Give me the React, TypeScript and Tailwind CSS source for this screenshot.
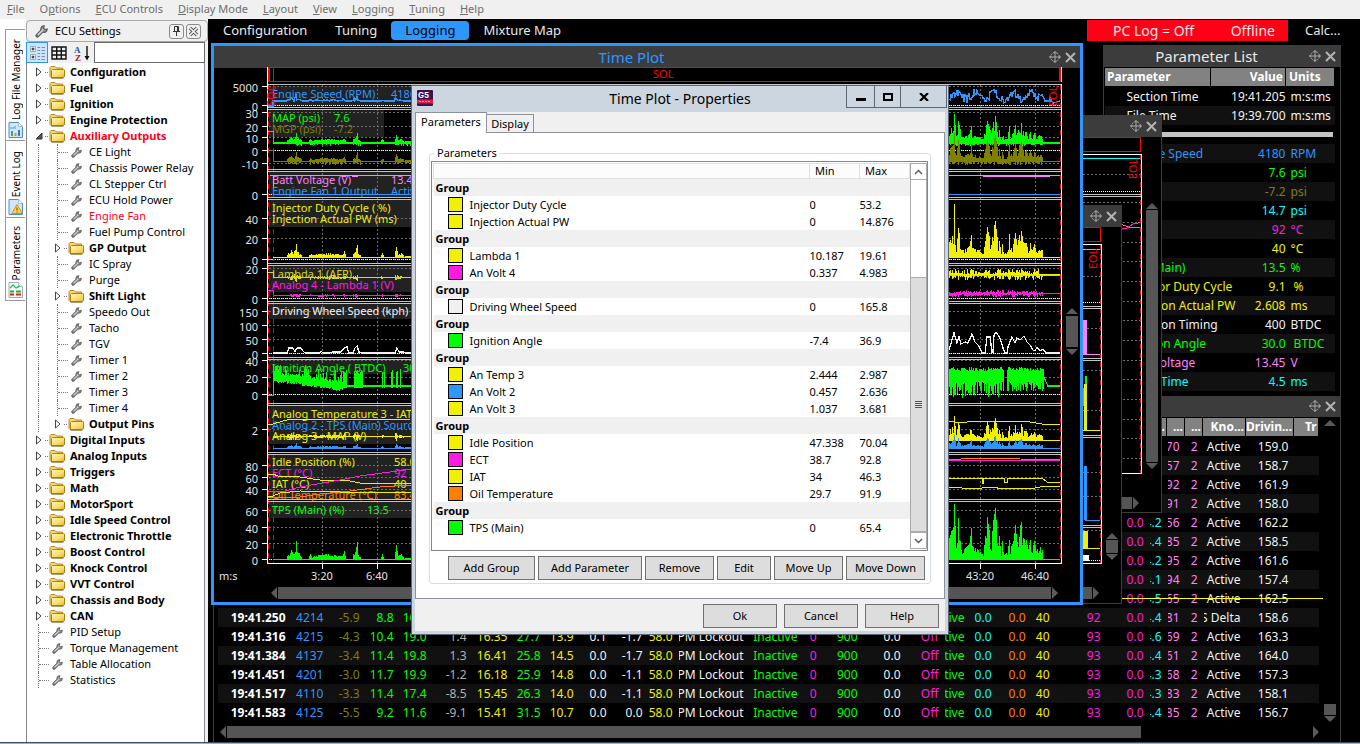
import type { ReactNode } from 'react';

const RED = '#ff0010';
const BLUE = '#2e97ff';
const GREEN = '#00ff00';
const OLIVE = '#808000';
const YELLOW = '#f0f000';
const MAGENTA = '#ff1ce0';
const VIOLET = '#ff80ff';
const ORANGE = '#ff8000';
const CYAN = '#00ffff';
const WHITE = '#f2f2f2';

/* ---------- menu and navigation ---------- */

const menus = ['File', 'Options', 'ECU Controls', 'Display Mode', 'Layout', 'View', 'Logging', 'Tuning', 'Help'];
const menuKeys = [0, 1, 0, 0, 0, 0, 0, 0, 0];

function MenuBar() {
  return (
    <nav className="flex h-[19px] shrink-0 items-center gap-[15px] bg-[#f0f0f0] pb-px pl-[7px] text-[11px] leading-[18px] text-[#6d6d6d]">
      {menus.map((label, i) => (
        <button key={label} className="whitespace-nowrap">
          {label.slice(0, menuKeys[i])}
          <span className="underline">{label[menuKeys[i]]}</span>
          {label.slice(menuKeys[i] + 1)}
        </button>
      ))}
    </nav>
  );
}

function LayoutBar() {
  return (
    <div className="flex h-[24px] items-center bg-black pb-px text-[13px] text-[#e8e8e8]">
      <button className="ml-[15px]">Configuration</button>
      <button className="ml-[28px]">Tuning</button>
      <button className="ml-[14px] h-[19px] rounded-[4px] bg-[#2e97ff] px-[14px] leading-[19px] text-black">Logging</button>
      <button className="ml-[14px]">Mixture Map</button>
      <div className="ml-auto flex h-[21px] w-[201px] items-center justify-between bg-[#ff0016] pr-[13px] pl-[26px] text-[14px]">
        <span>PC Log = Off</span>
        <span>Offline</span>
      </div>
      <button className="w-[72px] pl-[17px] text-left">Calc...</button>
    </div>
  );
}

/* ---------- small icons ---------- */

function WrenchIcon({ size = 11 }: { size?: number }) {
  return (
    <svg width={size} height={size} viewBox="0 0 12 12" className="shrink-0" fill="none">
      <path d="M2.2 9.8 L7 5" stroke="#5c5c5c" strokeWidth="3.6" strokeLinecap="round" />
      <path d="M8.6 0.8 A3 3 0 1 0 11.3 3.6 L9.2 4.2 L7.9 3 Z" fill="#8e8e8e" stroke="#5c5c5c" strokeWidth="1" />
      <path d="M2.4 9.6 L7.4 4.6" stroke="#d0d0d0" strokeWidth="1.6" strokeLinecap="round" />
      <circle cx="2.3" cy="9.7" r="0.7" fill="#555" />
    </svg>
  );
}

function FolderIcon() {
  return (
    <svg width="16" height="14" viewBox="0 0 16 14" className="shrink-0">
      <defs>
        <linearGradient id="folder" x1="0" y1="0" x2="1" y2="1">
          <stop offset="0" stopColor="#fff6c0" />
          <stop offset="0.6" stopColor="#fbdc6a" />
          <stop offset="1" stopColor="#e9b62c" />
        </linearGradient>
      </defs>
      <path d="M1 12 V2.5 L2 1.5 H6 L7.5 3 H13.5 V5" fill="#f5d878" stroke="#b08a20" />
      <path d="M2 12.5 H14 L15.5 11.5 V5 L14.5 4.5 H3.5 L2.5 5.5 V12 Z" fill="url(#folder)" stroke="#a67f18" />
      <path d="M2.5 13.3 H14.5" stroke="#7d6320" strokeWidth="0.8" />
    </svg>
  );
}

function Expander({ open }: { open?: boolean }) {
  return (
    <svg width="8" height="10" viewBox="0 0 8 10" className="shrink-0">
      {open ? <path d="M7 2 V8 H1 Z" fill="#555" stroke="#333" /> : <path d="M1.5 1 V9 L6 5 Z" fill="#fff" stroke="#444" />}
    </svg>
  );
}

function MoveIcon() {
  return (
    <svg width="12" height="12" viewBox="0 0 12 12" fill="none" stroke="#a8a8a8">
      <circle cx="6" cy="6" r="4.3" strokeDasharray="2 1" />
      <path d="M6 0.5 V11.5 M0.5 6 H11.5" />
      <path d="M4.8 1.8 L6 0.5 L7.2 1.8 M4.8 10.2 L6 11.5 L7.2 10.2 M1.8 4.8 L0.5 6 L1.8 7.2 M10.2 4.8 L11.5 6 L10.2 7.2" />
    </svg>
  );
}

function CloseIcon() {
  return (
    <svg width="11" height="11" viewBox="0 0 11 11" fill="none" stroke="#b4b4b4" strokeWidth="2">
      <path d="M1 1 L10 10 M10 1 L1 10" />
    </svg>
  );
}

function Arrow({ dir }: { dir: 'up' | 'down' | 'left' | 'right' }) {
  const shape = {
    up: 'M6 0 L12 6 H0 Z',
    down: 'M0 0 H12 L6 6 Z',
    left: 'M6 0 V12 L0 6 Z',
    right: 'M0 0 L6 6 L0 12 Z',
  }[dir];
  const flat = dir === 'up' || dir === 'down';
  return (
    <svg width={flat ? 12 : 6} height={flat ? 6 : 12} className="shrink-0">
      <path d={shape} fill="#5a5a5a" />
    </svg>
  );
}

/* ---------- left side ---------- */

function DocIcon({ kind }: { kind: 'log' | 'event' | 'param' }) {
  return (
    <svg width="15" height="16" viewBox="0 0 15 16" className="shrink-0">
      <path d="M1 0.5 H10.5 L14.5 4.5 V15.5 H1 Z" fill={kind === 'param' ? '#f7f7f7' : '#cfe6fb'} stroke={kind === 'param' ? '#aaa' : '#4f8fc9'} />
      <path d="M10.5 0.5 V4.5 H14.5" fill="#fff" stroke="#8aa" strokeWidth="0.7" />
      {kind === 'log' && (
        <>
          <path d="M3 5 V7 M5 5 V7 M7 4 V7" stroke="#4aa0d8" />
          <path d="M4 9 V14" stroke="#36b24a" strokeWidth="2" />
          <path d="M7.5 11 V14" stroke="#e8892c" strokeWidth="2" />
          <path d="M11 8 V14" stroke="#3676c8" strokeWidth="2" />
        </>
      )}
      {kind === 'event' && (
        <>
          <path d="M9 5.5 L14.3 14.5 H3.7 Z" fill="#ffd24d" stroke="#d09018" />
          <path d="M9 8.5 V11.5 M9 12.5 V13.5" stroke="#6b4a00" />
        </>
      )}
      {kind === 'param' && (
        <>
          <path d="M2 6 L5 3 L8 6 L12 4" fill="none" stroke="#26c46b" strokeWidth="1.4" />
          <path d="M2 9.5 H6 M8 9.5 H13" stroke="#1fb53c" strokeWidth="2" />
          <path d="M2 12.5 H6 M8 12.5 H13" stroke="#e02020" strokeWidth="2" />
        </>
      )}
    </svg>
  );
}

function SideTab({ label, kind, className }: { label: string; kind: 'log' | 'event' | 'param'; className: string }) {
  return (
    <button className={`flex w-[20px] flex-col items-center justify-end gap-[2px] border border-r-0 border-[#9a9a9a] bg-white pb-[2px] text-[10px] leading-[16px] ${className}`}>
      <span className="rotate-180 whitespace-nowrap [writing-mode:vertical-rl]">{label}</span>
      <DocIcon kind={kind} />
    </button>
  );
}

interface TreeItem {
  label: string;
  leaf?: boolean;
  open?: boolean;
  child?: boolean;
  active?: boolean;
}

const tree: TreeItem[] = [
  { label: 'Configuration' },
  { label: 'Fuel' },
  { label: 'Ignition' },
  { label: 'Engine Protection' },
  { label: 'Auxiliary Outputs', open: true, active: true },
  { label: 'CE Light', leaf: true, child: true },
  { label: 'Chassis Power Relay', leaf: true, child: true },
  { label: 'CL Stepper Ctrl', leaf: true, child: true },
  { label: 'ECU Hold Power', leaf: true, child: true },
  { label: 'Engine Fan', leaf: true, child: true, active: true },
  { label: 'Fuel Pump Control', leaf: true, child: true },
  { label: 'GP Output', child: true },
  { label: 'IC Spray', leaf: true, child: true },
  { label: 'Purge', leaf: true, child: true },
  { label: 'Shift Light', child: true },
  { label: 'Speedo Out', leaf: true, child: true },
  { label: 'Tacho', leaf: true, child: true },
  { label: 'TGV', leaf: true, child: true },
  { label: 'Timer 1', leaf: true, child: true },
  { label: 'Timer 2', leaf: true, child: true },
  { label: 'Timer 3', leaf: true, child: true },
  { label: 'Timer 4', leaf: true, child: true },
  { label: 'Output Pins', child: true },
  { label: 'Digital Inputs' },
  { label: 'Analog Inputs' },
  { label: 'Triggers' },
  { label: 'Math' },
  { label: 'MotorSport' },
  { label: 'Idle Speed Control' },
  { label: 'Electronic Throttle' },
  { label: 'Boost Control' },
  { label: 'Knock Control' },
  { label: 'VVT Control' },
  { label: 'Chassis and Body' },
  { label: 'CAN' },
  { label: 'PID Setup', leaf: true },
  { label: 'Torque Management', leaf: true },
  { label: 'Table Allocation', leaf: true },
  { label: 'Statistics', leaf: true },
];

function TreeRow({ item }: { item: TreeItem }) {
  return (
    <li className={`flex h-[16px] items-center pl-[8px] ${item.active ? 'text-[#ff0018]' : 'text-black'}`}>
      {item.child && <span className="ml-[3px] h-full w-[16px] border-l border-dotted border-[#777]" />}
      {item.leaf ? (
        <>
          <span className="ml-[3px] flex h-full w-[11px] items-center border-l border-dotted border-[#777]">
            <span className="w-full border-t border-dotted border-[#777]" />
          </span>
          <span className="mr-[7px] ml-[3px] flex">
            <WrenchIcon />
          </span>
          <span className="whitespace-nowrap">{item.label}</span>
        </>
      ) : (
        <>
          <Expander open={item.open} />
          <span className="mr-[1px] ml-[2px] w-[3px] border-t border-dotted border-[#777]" />
          <FolderIcon />
          <span className="ml-[5px] font-bold whitespace-nowrap">{item.label}</span>
        </>
      )}
    </li>
  );
}

function SettingsPanel() {
  return (
    <aside className="flex w-[182px] shrink-0 flex-col bg-[#f0f0f0]">
      <header className="mt-px flex h-[22px] items-center rounded-[4px] border border-[#a8a8a8] pr-[6px] pl-[8px]">
        <WrenchIcon size={13} />
        <span className="ml-[7px] flex-1 text-[11px] whitespace-nowrap">ECU Settings</span>
        <button aria-label="Pin" className="flex h-[15px] w-[15px] items-center justify-center rounded-[3px] border border-[#8a8a8a]">
          <svg width="9" height="10" viewBox="0 0 9 10" fill="none" stroke="#333">
            <path d="M2.5 0.5 H6.5 V5 M2.5 0.5 V5 M1 5.5 H8 M4.5 5.5 V10 M5.5 1 V5" />
          </svg>
        </button>
        <button aria-label="Close" className="ml-[2px] flex h-[15px] w-[15px] items-center justify-center rounded-[3px] border border-[#8a8a8a]">
          <svg width="11" height="11" viewBox="0 0 11 11" fill="none">
            <path d="M2 2 L9 9 M9 2 L2 9" stroke="#555" strokeWidth="3.4" />
            <path d="M2 2 L9 9 M9 2 L2 9" stroke="#f4f4f4" strokeWidth="1.6" />
          </svg>
        </button>
      </header>
      <div className="flex h-[21px] items-center pr-[3px]">
        <button aria-label="Tree view" className="flex h-[21px] w-[22px] items-center justify-center border border-[#2e97e0] bg-[#cbe6fa]">
          <svg width="17" height="16" viewBox="0 0 17 16" fill="none">
            <path d="M1.5 1.5 H6.5 V6.5 H1.5 Z M1.5 9.5 H6.5 V14.5 H1.5 Z" fill="#fff" stroke="#9ab" />
            <path d="M4 2.5 V5.5 M2.5 4 H5.5 M4 10.5 V13.5 M2.5 12 H5.5" stroke="#111" />
            <path d="M8.5 2.5 H11 M12.5 2.5 H16 M8.5 5.5 H11 M12.5 5.5 H16 M8.5 8.5 H11 M12.5 8.5 H16 M8.5 11.5 H11 M12.5 11.5 H16 M8.5 14.5 H11 M12.5 14.5 H16" stroke="#7890b0" />
          </svg>
        </button>
        <button aria-label="Grid view" className="ml-[3px]">
          <svg width="16" height="14" viewBox="0 0 16 14" fill="none" stroke="#111" strokeWidth="1.4">
            <path d="M1 1 H15 V13 H1 Z M5.7 1 V13 M10.3 1 V13 M1 5 H15 M1 9 H15" />
          </svg>
        </button>
        <button aria-label="Sort" className="ml-[7px]">
          <svg width="17" height="16" viewBox="0 0 17 16" fill="none">
            <text x="0" y="8" fontSize="9" fontWeight="700" fill="#2a50a8" fontFamily="Liberation Serif, serif">A</text>
            <text x="1" y="16" fontSize="9" fontWeight="700" fill="#a02020" fontFamily="Liberation Serif, serif">Z</text>
            <path d="M13 1 V13" stroke="#111" strokeWidth="1.4" />
            <path d="M10.5 11 H15.5 L13 15.5 Z" fill="#111" />
          </svg>
        </button>
        <input aria-label="Filter" className="ml-[3px] h-[21px] min-w-0 flex-1 border border-[#6a6a6a] bg-white px-1 text-[11px]" />
      </div>
      <ul className="mr-[3px] flex-1 border-x border-[#828790] bg-white pt-px text-[11px] leading-[16px]">
        {tree.map(item => (
          <TreeRow key={item.label} item={item} />
        ))}
      </ul>
    </aside>
  );
}

/* ---------- plot window ---------- */

function noise(x: number, seed: number) {
  const v = Math.sin(x * 12.9898 + seed * 78.233) * 43758.5453;
  return v - Math.floor(v);
}

function interpolate(keys: number[][], x: number) {
  for (let i = 1; i < keys.length; i++) {
    const [x0, y0] = keys[i - 1];
    const [x1, y1] = keys[i];
    if (x >= x0 && x <= x1) return y0 + ((y1 - y0) * (x - x0)) / (x1 - x0 || 1);
  }
  return 0;
}

// throttle opening along the time axis, in pixels above the base line
const throttle = [
  [274, 0], [286, 0], [288, 4], [291, 8], [293, 4], [295, 9], [296, 17], [297, 6], [300, 4], [302, 0], [308, 0], [310, 4], [312, 1],
  [318, 3], [330, 4], [340, 2], [342, 2], [344, 7], [346, 0], [352, 0], [353, 4], [355, 6], [357, 16], [358, 3], [361, 0], [380, 0],
  [382, 4], [384, 0], [394, 0], [396, 13], [398, 2], [401, 4], [404, 0], [948, 16], [951, 27], [953, 30], [954, 54], [956, 10],
  [958, 40], [960, 25], [961, 8], [965, 10], [969, 14], [971, 30], [972, 12], [976, 9], [979, 8], [981, 4], [983, 5], [985, 22],
  [987, 41], [989, 28], [991, 16], [993, 38], [995, 50], [997, 27], [998, 12], [999, 22], [1001, 3], [1002, 17], [1004, 3],
  [1007, 6], [1009, 31], [1010, 9], [1013, 17], [1015, 33], [1017, 16], [1019, 30], [1021, 36], [1023, 20], [1026, 18],
  [1028, 9], [1030, 18], [1032, 9], [1034, 17], [1036, 7], [1039, 12], [1042, 8], [1043, 0], [1060, 0],
];

const peaks = [296, 357, 396, 954, 958, 987, 995, 1015, 1021];

function spikes(base: number, scale: number, seed: number, below = 0) {
  let d = '';
  for (let x = 274; x <= 1060; x++) {
    const h = interpolate(throttle, x);
    if (h <= 0) continue;
    const k = peaks.includes(x) || noise(x, seed) > 0.35 ? 1 : 0.4 + noise(x, seed);
    const low = below * noise(x, seed + 5);
    d += `M${x}.5 ${base + low}V${(base - h * scale * k - 1).toFixed(1)}`;
  }
  return d + `M273 ${base}.5H1060`;
}

function jitter(base: number, size: number, seed: number, from = 274, to = 1060) {
  let d = `M${from} ${base}.5H${to}`;
  for (let x = from; x <= to; x++) {
    const amp = Math.min(1, interpolate(throttle, x) / 10) * size;
    if (amp <= 0) continue;
    d += `M${x}.5 ${(base - amp * noise(x, seed)).toFixed(1)}V${(base + 1 + amp * noise(x, seed + 3)).toFixed(1)}`;
  }
  return d;
}

function engineSpeed() {
  let d = 'M268 106H273V101';
  for (let x = 274; x <= 411; x++) d += `L${x} ${(101 - interpolate(throttle, x) * 0.5 * noise(x, 2)).toFixed(1)}`;
  d += 'M948 98';
  for (let x = 949; x <= 1043; x++) d += `L${x} ${(96 + Math.sin(x / 3) * 3 + (noise(x, 4) - 0.5) * 8).toFixed(1)}`;
  return d + 'L1045 101H1050V98L1053 103L1060 101';
}

function ignitionAngle() {
  let d = 'M268 395H273V368';
  for (let x = 274; x <= 342; x++) {
    const mid = 376 + (x - 274) * 0.14;
    const reach = noise(x, 8) > 0.5 ? 13 : 3;
    d += `M${x}.5 ${Math.max(364, mid - 2 - noise(x, 7) * reach).toFixed(1)}V${(mid + 3 + noise(x, 9) * 3).toFixed(1)}`;
  }
  for (const x of [343, 344, 345, 346, 354, 355, 356, 357, 358, 359, 360, 361, 362, 382, 384, 391, 392, 396, 397, 400]) {
    d += `M${x}.5 ${(369 + noise(x, 3) * 5).toFixed(1)}V388`;
  }
  d += 'M340 386.5H411M340 385.5H411';
  for (let x = 948; x <= 1043; x++) {
    if (x > 1003 && x < 1007) continue;
    d += `M${x}.5 ${(367 + noise(x, 11) * 4).toFixed(1)}V${(382 + noise(x, 12) * (x < 1002 ? 16 : 9)).toFixed(1)}`;
  }
  return d + 'M1043 376L1048 385.5H1060M1044 377L1048 386.5H1060';
}

const wheelSpeed =
  'M273 353H287L289 348H293L295 352L297 348H301L303 351L305 353H320L321 351L323 353H330L332 352H341L344 348L347 347L349 353H353L355 348L357 346L359 352L362 353H395L397 348L399 352L404 352L406 353H411' +
  'M949 350L954 333L957 343L959 337L961 344L965 342L968 343L972 334L975 342L978 345L981 350L982 353H985L987 337H990L992 352H993L994 335L996 332L1000 338L1003 348L1005 353H1007L1008 347L1012 337L1015 343L1017 338L1020 340L1024 336L1027 342L1030 345L1033 350L1035 351L1037 347L1040 351L1043 349L1046 353H1060';

const axis: [string, number][] = [
  ['5000', 87], ['0', 106], ['30', 113], ['20', 127], ['10', 138], ['0', 151], ['-10', 164], ['0', 195], ['40', 219], ['20', 239],
  ['0', 260], ['20', 269], ['0', 299], ['150', 312], ['100', 326], ['50', 340], ['0', 354], ['40', 361], ['20', 378], ['0', 395],
  ['2', 430], ['80', 466], ['60', 478], ['40', 490], ['60', 511], ['40', 528], ['20', 544], ['0', 560],
];

const splits = [107, 169, 197, 263, 301, 357, 403, 452, 499];

interface Legend {
  y: number;
  height: number;
  width?: number;
  lines: [string, string, string?, number?][];
}

const legends: Legend[] = [
  { y: 86, height: 20, lines: [['Engine Speed (RPM)', BLUE, '4180', 391]] },
  { y: 110, height: 27, width: 115, lines: [['MAP (psi)', GREEN, '7.6', 334], ['MGP (psi)', OLIVE, '-7.2', 334]] },
  { y: 172, height: 25, lines: [['Batt Voltage (V)', VIOLET, '13.45', 391], ['Engine Fan 1 Output', BLUE, 'Active', 391]] },
  { y: 200, height: 27, lines: [['Injector Duty Cycle ( %)', YELLOW], ['Injection Actual PW (ms)', YELLOW]] },
  { y: 266, height: 26, lines: [['Lambda 1 (AFR)', '#d8d820'], ['Analog 4 - Lambda 1 (V)', MAGENTA]] },
  { y: 303, height: 16, lines: [['Driving Wheel Speed (kph)', WHITE]] },
  { y: 360, height: 14, lines: [['Ignition Angle ( BTDC)', GREEN, '30.0', 403]] },
  { y: 406, height: 38, lines: [['Analog Temperature 3 - IAT', YELLOW], ['Analog 2 - TPS (Main) Source', BLUE], ['Analog 3 - MAP (V)', YELLOW]] },
  { y: 454, height: 45, lines: [['Idle Position (%)', YELLOW, '58.0', 394], ['ECT (°C)', MAGENTA, '92', 394], ['IAT (°C)', YELLOW, '40', 394], ['Oil Temperature (°C)', ORANGE, '83.4', 394]] },
  { y: 502, height: 16, lines: [['TPS (Main) (%)', GREEN, '13.5', 367]] },
];

function Plot() {
  return (
    <svg viewBox="214 67 849 519" width="849" height="519" className="shrink-0" fill="none" shapeRendering="crispEdges" fontSize="11">
      {legends.map(l => (
        <rect key={l.y} x="269" y={l.y} width={l.width ?? 145} height={l.height} fill="#222" />
      ))}
      <g stroke="#6e6e6e" strokeDasharray="2 2">
        {axis.map(([, y], i) => (
          <path key={i} d={`M269 ${y - 0.5}H1060`} />
        ))}
        {Array.from({ length: 14 }).map((_, i) => (
          <path key={i} d={`M${Math.round(322 + i * 54.85) + 0.5} 85V563`} />
        ))}
      </g>
      <g stroke="#fff" strokeDasharray="1 1">
        {[105.5, 150.5, 194.5, 259.5, 298.5, 353.5, 394.5, 559.5].map(y => (
          <path key={y} d={`M269 ${y}H1060`} />
        ))}
      </g>
      <g stroke="#fff">
        {axis.map(([, y], i) => (
          <path key={i} d={`M262 ${y - 0.5}H267`} />
        ))}
        {Array.from({ length: 14 }).map((_, i) => (
          <path key={i} d={`M${Math.round(322 + i * 54.85) + 0.5} 563V569`} />
        ))}
      </g>
      <g stroke={RED}>
        <path d="M268 67.5H1061M268 81.5H1061M273.5 67V82" />
        <path d="M269 67V82M1060 67V82" strokeWidth="2" />
        <path d="M268.5 85V563M273.5 85V563M1060.5 85V563" strokeDasharray="5 4" />
      </g>
      <g shapeRendering="auto">
        {legends.map(l =>
          l.lines.map(([label, color, value, x], i) => (
            <g key={label} fill={color}>
              <text x="272" y={l.y + 12 + i * 11}>{label}</text>
              {value && <text x={x} y={l.y + 12 + i * 11}>{value}</text>}
            </g>
          ))
        )}
      </g>
      <path d={engineSpeed()} stroke={BLUE} strokeWidth="1.4" />
      <path d={spikes(142, 0.5, 1, 4)} stroke={GREEN} />
      <path d="M268 131.5H273V143M273 142.5H1060M273 143.5H1060" stroke={GREEN} />
      <path d={spikes(161, 0.5, 2, 4)} stroke={OLIVE} />
      <path d="M268 150.5H273V161H1060" stroke={OLIVE} />
      <path d="M273 187V175.5H300M270 175.5H411M948 175.5H1060M983 176.5H1050M342 176.5H346M352 176.5H358" stroke={VIOLET} />
      <path d="M273 194.5H1060" stroke={BLUE} />
      <path d={spikes(257, 0.7, 3)} stroke={YELLOW} />
      <path d="M954.5 257V204M268 259.5H273" stroke={YELLOW} />
      <path d={jitter(277, 4, 4, 274, 411)} stroke="#d8d820" />
      <path d={jitter(274, 5, 4, 948, 1060)} stroke={YELLOW} />
      <path d="M268 272H273V277M948 275.5H1060" stroke="#d8d820" />
      <path d={jitter(295, 2, 5, 274, 411)} stroke={MAGENTA} />
      <path d={jitter(293, 3, 5, 948, 1060)} stroke={MAGENTA} />
      <path d="M268 290H273V295" stroke={MAGENTA} />
      <path d={wheelSpeed} stroke={WHITE} strokeWidth="1.3" />
      <path d={ignitionAngle()} stroke={GREEN} />
      <path d={spikes(440, 0.42, 6, 1)} stroke={YELLOW} clipPath="url(#secondHalf)" />
      <path d={jitter(436, 4, 9, 274, 411)} stroke={YELLOW} />
      <path d={spikes(448, 0.22, 7)} stroke={BLUE} />
      <path d="M268 424H273L290 419H320L340 420L411 419M948 421L960 423L975 421L990 422L1005 421L1030 422L1042 424H1060" stroke={YELLOW} />
      <path d="M268 474H273L278 476L300 477L320 480H345L360 483H411M948 478H982V483H983V478H1004V482H1007V478H1042L1047 482H1060" stroke={YELLOW} />
      <path d="M268 496H273L280 493L300 491L340 492L370 492H411M948 487L975 489L990 487L1005 489L1035 488L1045 486H1060" stroke={YELLOW} />
      <path d="M268 491L285 491L300 487L340 480L360 476L390 472L411 469M948 460H1060" stroke={MAGENTA} />
      <path d="M268 497H300L320 494L350 491L380 487L411 485M948 460L975 458H1000L1020 459L1060 460" stroke={ORANGE} />
      <path d={spikes(559, 1, 8)} stroke={GREEN} />
      <clipPath id="secondHalf">
        <rect x="600" y="400" width="460" height="60" />
      </clipPath>
      <g stroke="#c4c4c4">
        <path d="M267 84.5H1062" />
        {splits.map(y => (
          <path key={y} d={`M267 ${y + 0.5}H1062M267 ${y + 2.5}H1062`} />
        ))}
        <path d="M267.5 67V563.5H1061.5V84M1061.5 67V82" stroke="#fff" />
      </g>
      <g shapeRendering="auto">
        <g fill="#e4e4e4" textAnchor="end">
          {axis.map(([label, y], i) => (
            <text key={i} x="258" y={y + 5}>{label}</text>
          ))}
        </g>
        <g fill="#e4e4e4" textAnchor="middle">
          {([['3:20', 322], ['6:40', 377], ['43:20', 980], ['46:40', 1035]] as [string, number][]).map(([label, x]) => (
            <text key={label} x={x} y="580">{label}</text>
          ))}
        </g>
        <text x="219" y="580" fill="#e4e4e4">m:s</text>
        <text x="653" y="78" fill={RED}>SOL</text>
        <text transform="translate(1057 106) rotate(-90)" fill={RED}>EOL</text>
        <text transform="translate(275 106) rotate(-90)" fill={RED}>SOL</text>
      </g>
    </svg>
  );
}

function TitleBar({ title, tone = 'text-[#e8e8e8]' }: { title?: string; tone?: string }) {
  return (
    <header className="flex h-[22px] shrink-0 items-center bg-[#3c3c3c] pr-[4px]">
      <h2 className={`flex-1 text-center text-[15px] leading-[22px] ${tone}`}>{title}</h2>
      <button aria-label="Move window"><MoveIcon /></button>
      <button aria-label="Close window" className="ml-[4px]"><CloseIcon /></button>
    </header>
  );
}

function HBar({ className }: { className: string }) {
  return (
    <div className={`flex h-[12px] items-center gap-px ${className}`}>
      <Arrow dir="left" />
      <div className="h-[12px] flex-1 bg-[#555]" />
      <Arrow dir="right" />
    </div>
  );
}

function MainPlotWindow() {
  return (
    <section className="absolute top-0 left-[3px] w-[872px] border-[3px] border-[#2e97ff] bg-black">
      <TitleBar title="Time Plot" tone="text-[#2e97ff]" />
      <div className="-mt-px flex">
        <Plot />
        <div className="flex flex-1 flex-col items-center gap-[2px] pt-[241px]">
          <Arrow dir="up" />
          <div className="h-[31px] w-[12px] bg-[#555]" />
          <Arrow dir="down" />
        </div>
      </div>
      <HBar className="mt-px mr-[22px] mb-[3px] ml-[57px]" />
    </section>
  );
}

function SecondPlotWindow() {
  return (
    <section className="absolute top-[162px] left-[855px] flex w-[59px] flex-col border-r border-b border-[#3c3c3c] bg-black">
      <TitleBar />
      <div className="flex">
        <svg viewBox="1063 227 39 360" width="39" height="360" fill="none" shapeRendering="crispEdges">
          <path d="M1063 276.5H1101M1063 328.5H1101M1063 370.5H1101M1063 410.5H1101M1063 430.5H1101M1063 472.5H1101M1063 496.5H1101M1063 530.5H1101" stroke="#6e6e6e" strokeDasharray="2 2" />
          <path d="M1063 302.5H1101M1063 560.5H1101" stroke="#fff" strokeDasharray="1 1" />
          <path d="M1063 227.5H1101M1063 241.5H1101M1100.5 227V242" stroke={RED} />
          <path d="M1100.5 245V563" stroke={RED} strokeDasharray="5 4" />
          <path d="M1063 249.5H1100M1083 354.5H1100" stroke={VIOLET} />
          <rect x="1083" y="320" width="4" height="34" fill={VIOLET} />
          <path d="M1084 406V388M1085.5 390V376" stroke={GREEN} strokeWidth="2" />
          <rect x="1084" y="384" width="3" height="47" fill={YELLOW} />
          <path d="M1083 430.5H1100M1088 548.5H1100" stroke={YELLOW} />
          <rect x="1084" y="466" width="3" height="54" fill={BLUE} />
          <path d="M1085 520.5H1100" stroke={BLUE} />
          <rect x="1083" y="531" width="5" height="18" fill={YELLOW} />
          <rect x="1083" y="555" width="6" height="6" fill="#fff" />
          <path d="M1063 306.5H1101M1063 308.5H1101M1063 358.5H1101M1063 360.5H1101M1063 435.5H1101M1063 437.5H1101M1063 525.5H1101M1063 527.5H1101" stroke="#c4c4c4" />
          <path d="M1063 244.5H1101.5V563.5H1063" stroke="#fff" />
          <text transform="translate(1097 269) rotate(-90)" fill={RED} fontSize="11">EOL</text>
        </svg>
        <div className="flex flex-1 flex-col items-center gap-px pt-[306px]">
          <Arrow dir="up" />
          <div className="h-[13px] w-[12px] bg-[#555]" />
          <Arrow dir="down" />
        </div>
      </div>
      <HBar className="mr-[22px] mb-[4px]" />
    </section>
  );
}

function ThirdPlotWindow() {
  return (
    <section className="absolute top-[72px] left-[855px] flex w-[99px] flex-col border-r border-b border-[#3c3c3c] bg-black">
      <TitleBar />
      <div className="flex">
        <svg viewBox="1063 137 79 360" width="79" height="360" fill="none" shapeRendering="crispEdges">
          <path d="M1063 174.5H1141M1063 202.5H1141M1063 222.5H1141M1063 242.5H1141M1063 261.5H1141M1063 281.5H1141M1063 301.5H1141M1063 320.5H1141M1063 340.5H1141M1063 360.5H1141M1063 379.5H1141M1063 399.5H1141M1063 419.5H1141M1063 438.5H1141M1063 458.5H1141" stroke="#6e6e6e" strokeDasharray="2 2" />
          <path d="M1063 191.5H1141" stroke="#fff" strokeDasharray="1 1" />
          <path d="M1063 137.5H1141M1063 151.5H1141M1140.5 137V152" stroke={RED} />
          <path d="M1140.5 155V473" stroke={RED} strokeDasharray="5 4" />
          <path d="M1063 158.5H1140" stroke={CYAN} />
          <path d="M1121 224L1128 227H1140" stroke={ORANGE} />
          <path d="M1121 228H1127L1133 224L1140 222.5" stroke={MAGENTA} />
          <path d="M1063 194.5H1141M1063 196.5H1141" stroke="#c4c4c4" />
          <path d="M1063 154.5H1141.5V473.5H1063" stroke="#fff" />
          <text transform="translate(1137 179) rotate(-90)" fill={RED} fontSize="11">EOL</text>
        </svg>
        <div className="flex flex-1 flex-col items-center gap-px pt-[66px]">
          <Arrow dir="up" />
          <div className="h-[252px] w-[12px] bg-[#555]" />
          <Arrow dir="down" />
        </div>
      </div>
      <HBar className="mr-[22px] mb-[3px]" />
    </section>
  );
}

/* ---------- parameter list ---------- */

const parameters: [string, string, string, string][] = [
  ['Engine Speed', '4180', 'RPM', 'text-[#2e97ff]'],
  ['MAP', '7.6', 'psi', 'text-[#00ff00]'],
  ['MGP', '-7.2', 'psi', 'text-[#808000]'],
  ['BAP', '14.7', 'psi', 'text-[#00ffff]'],
  ['ECT', '92', '°C', 'text-[#ff1ce0]'],
  ['IAT', '40', '°C', 'text-[#f0f000]'],
  ['TPS (Main)', '13.5', '%', 'text-[#00ff00]'],
  ['Injector Duty Cycle', '9.1', '\u00a0%', 'text-[#f0f000]'],
  ['Injection Actual PW', '2.608', 'ms', 'text-[#f0f000]'],
  ['Injection Timing', '400', 'BTDC', 'text-[#f2f2f2]'],
  ['Ignition Angle', '30.0', '\u00a0BTDC', 'text-[#00ff00]'],
  ['Batt Voltage', '13.45', 'V', 'text-[#ff80ff]'],
  ['Dwell Time', '4.5', 'ms', 'text-[#00ffff]'],
];

function ParamRow({ row }: { row: [string, string, string, string] }) {
  const [name, value, unit, tone] = row;
  return (
    <tr className={`h-[19px] even:bg-[#111] ${tone}`}>
      <td className="p-0 pl-[22px] whitespace-nowrap">{name}</td>
      <td className="p-0 text-right">{value}</td>
      <td className="p-0 pl-[5px] whitespace-nowrap">{unit}</td>
    </tr>
  );
}

function ParameterList() {
  return (
    <section className="absolute top-[2px] left-[895px] h-[351px] w-[238px] border-x border-[#3c3c3c] bg-black">
      <TitleBar title="Parameter List" />
      <table className="w-[231px] table-fixed border-collapse text-[12px] leading-[19px]">
        <colgroup>
          <col className="w-[106px]" />
          <col className="w-[75px]" />
          <col />
        </colgroup>
        <thead>
          <tr className="h-[19px] text-white">
            <th className="border border-black bg-[#828282] p-0 pl-[2px] text-left leading-[16px]">Parameter</th>
            <th className="border border-black bg-[#828282] p-0 pr-[2px] text-right leading-[16px]">Value</th>
            <th className="border border-black bg-[#828282] p-0 pl-[3px] text-left leading-[16px]">Units</th>
          </tr>
        </thead>
        <tbody>
          <ParamRow row={['Section Time', '19:41.205', 'm:s:ms', 'text-[#f2f2f2]']} />
          <ParamRow row={['File Time', '19:39.700', 'm:s:ms', 'text-[#f2f2f2]']} />
          <tr className="h-[19px]">
            <td colSpan={3} className="p-0 pr-[2px] pl-[2px]">
              <div className="h-[5px] bg-[#c4c4c4]" />
            </td>
          </tr>
          {parameters.map(row => (
            <ParamRow key={row[0]} row={row} />
          ))}
        </tbody>
      </table>
    </section>
  );
}

/* ---------- log table ---------- */

const logColumns: [string, string][] = [
  ['w-[73px]', 'font-bold text-white'],
  ['w-[38px]', 'text-[#2e97ff]'],
  ['w-[36px]', 'text-[#808000]'],
  ['w-[34px]', 'text-[#00ff00]'],
  ['w-[33px]', 'text-[#00ff00]'],
  ['w-[40px]', 'text-[#b0b0b0]'],
  ['w-[41px]', 'text-[#f0f000]'],
  ['w-[33px]', 'text-[#00ff00]'],
  ['w-[33px]', 'text-[#f0f000]'],
  ['w-[33px]', 'text-[#f2f2f2]'],
  ['w-[36px]', 'text-[#f2f2f2]'],
  ['w-[30px]', 'text-[#f0f000]'],
  ['w-[71px]', 'text-[#f2f2f2]'],
  ['w-[54px]', 'text-[#00ff00]'],
  ['w-[19px]', 'text-[#ff1ce0]'],
  ['w-[41px]', 'text-[#00ff00]'],
  ['w-[43px]', 'text-[#f2f2f2]'],
  ['w-[38px]', 'text-[#ff1ce0]'],
  ['w-[26px]', 'text-[#00ff00]'],
  ['w-[27px]', 'text-[#00ffff]'],
  ['w-[34px]', 'text-[#ff8000]'],
  ['w-[24px]', 'text-[#f0f000]'],
  ['w-[51px]', 'text-[#ff1ce0]'],
  ['w-[43px]', 'text-[#ff1ce0]'],
  ['w-[18px]', 'text-[#00ffff]'],
  ['w-[18px]', 'text-[#ff80ff]'],
  ['w-[18px]', 'text-[#ff80ff]'],
  ['w-[43px]', 'text-[#f2f2f2]'],
  ['w-[48px]', 'text-[#f2f2f2]'],
  ['w-[25px]', 'text-[#f2f2f2]'],
];

const samples = [
  '19:40.649 4180 -5.2 9.4 13.5 2.1 16.02 29.8 12.4 0.0 -1.1|92 0.0 4.3 70 2 Active 159.0',
  '19:40.716 4176 -5.0 9.7 13.9 2.0 16.04 29.6 12.6 0.0 -1.1|92 0.0 4.2 57 2 Active 158.7',
  '19:40.783 4188 -4.8 9.9 14.2 1.9 16.10 29.5 12.8 0.0 -1.1|92 0.0 4.4 92 2 Active 161.9',
  '19:40.850 4190 -4.7 10.0 14.6 1.8 16.14 29.2 13.0 0.0 -1.7|92 0.0 4.1 91 2 Active 158.0',
  '19:40.916 4195 -4.6 10.1 15.0 1.8 16.18 29.0 13.2 0.0 -1.7|92 0.0 4.2 56 2 Active 162.2',
  '19:40.983 4199 -4.9 9.8 15.4 1.7 16.20 28.8 13.1 0.0 -1.7|92 0.0 4.4 85 2 Active 158.5',
  '19:41.050 4202 -5.1 9.6 15.2 1.6 16.24 28.5 12.9 0.0 -1.7|92 0.0 4.2 95 2 Active 161.6',
  '19:41.117 4206 -5.4 9.3 15.0 1.6 16.28 28.2 12.7 0.0 -1.7|92 0.0 4.1 94 2 Active 157.4',
  '19:41.184 4210 -5.7 9.0 15.8 1.5 16.30 28.0 12.5 0.0 -1.7|92 0.0 4.5 65 2 Active 162.5',
  '19:41.250 4214 -5.9 8.8 16.4 1.5 16.32 27.9 13.1 0.1 -1.7|92 0.0 4.4 81 2 S\u00a0Delta 158.6',
  '19:41.316 4215 -4.3 10.4 19.0 1.4 16.35 27.7 13.9 0.1 -1.7|93 0.0 4.6 69 2 Active 163.3',
  '19:41.384 4137 -3.4 11.4 19.8 1.3 16.41 25.8 14.5 0.0 -1.7|93 0.0 4.4 61 2 Active 164.0',
  '19:41.451 4201 -3.0 11.7 19.9 -1.2 16.18 25.9 14.8 0.0 -1.1|93 0.0 4.3 68 2 Active 157.3',
  '19:41.517 4110 -3.3 11.4 17.4 -8.5 15.45 26.3 14.0 0.0 -1.1|93 0.0 4.3 83 2 Active 158.1',
  '19:41.583 4125 -5.5 9.2 11.6 -9.1 15.41 31.5 10.7 0.0 0.0|93 0.0 4.4 85 2 Active 156.7',
].map(line => {
  // split on plain spaces only, a cell may hold a non-breaking one
  const [engine, chassis] = line.split('|');
  return [...engine.split(' '), '58.0', 'PM Lockout', 'Inactive', '0', '900', '0.0', 'Off', 'Active', '0.0', '0.0', '40', ...chassis.split(' '), ''];
});

function LogTable() {
  return (
    <section className="absolute top-[352px] right-[19px] left-[5px] border-x border-[#3c3c3c] bg-black">
      <TitleBar />
      <div className="flex">
        <div className="min-w-0 flex-1 overflow-hidden pl-[3px]">
          <table className="w-[1101px] table-fixed border-collapse text-[12px] leading-[19px]">
            <colgroup>
              {logColumns.map(([width], i) => (
                <col key={i} className={width} />
              ))}
            </colgroup>
            <thead>
              <tr className="h-[19px] text-white">
                {logColumns.map((_, i) => (
                  <th
                    key={i}
                    className={`overflow-hidden border border-black bg-[#828282] p-0 leading-[16px] whitespace-nowrap ${i === 29 ? 'pl-[11px] text-left' : 'pr-px text-right'}`}
                  >
                    {i === 27 ? 'Kno...' : i === 28 ? 'Drivin...' : i === 29 ? 'Tr' : '...'}
                  </th>
                ))}
              </tr>
            </thead>
            <tbody>
              {samples.map(row => (
                <tr key={row[0]} className="h-[19px] even:bg-[#111]">
                  {row.map((cell, i) => (
                    <td key={i} className={`p-0 ${logColumns[i][1]}`}>
                      <div className="mr-[5px] ml-px flex h-[19px] justify-end overflow-hidden whitespace-nowrap">{cell}</div>
                    </td>
                  ))}
                </tr>
              ))}
            </tbody>
          </table>
        </div>
        <div className="flex w-[20px] flex-col items-center pt-[3px]">
          <Arrow dir="up" />
          <div className="mt-auto mb-px h-[11px] w-[12px] bg-[#555]" />
          <Arrow dir="down" />
        </div>
      </div>
      <div className="mb-[4px] flex items-center gap-px pt-[4px] pr-[21px] pl-[6px]">
        <Arrow dir="left" />
        <div className="h-[12px] w-[914px] bg-[#555]" />
        <span className="flex-1" />
        <Arrow dir="right" />
      </div>
      <div className="absolute top-[203px] right-[17px] left-0 h-px bg-[#ffff00]" />
    </section>
  );
}

/* ---------- properties dialog ---------- */

const groups: [string, string, string, string][][] = [
  [['Injector Duty Cycle', '0', '53.2', 'bg-[#f0f000]'], ['Injection Actual PW', '0', '14.876', 'bg-[#f0f000]']],
  [['Lambda 1', '10.187', '19.61', 'bg-[#f0f000]'], ['An Volt 4', '0.337', '4.983', 'bg-[#ff1ce0]']],
  [['Driving Wheel Speed', '0', '165.8', 'bg-[#f0f0f0]']],
  [['Ignition Angle', '-7.4', '36.9', 'bg-[#00ff00]']],
  [['An Temp 3', '2.444', '2.987', 'bg-[#f0f000]'], ['An Volt 2', '0.457', '2.636', 'bg-[#2e97ff]'], ['An Volt 3', '1.037', '3.681', 'bg-[#f0f000]']],
  [['Idle Position', '47.338', '70.04', 'bg-[#f0f000]'], ['ECT', '38.7', '92.8', 'bg-[#ff1ce0]'], ['IAT', '34', '46.3', 'bg-[#f0f000]'], ['Oil Temperature', '29.7', '91.9', 'bg-[#ff8000]']],
  [['TPS (Main)', '0', '65.4', 'bg-[#00ff00]']],
];

function DialogButton({ className, children }: { className: string; children: ReactNode }) {
  return (
    <button className={`h-[24px] border border-[#707070] bg-[#ddd] leading-[22px] whitespace-nowrap ${className}`}>{children}</button>
  );
}

function Chevron({ d }: { d: string }) {
  return (
    <button aria-label="Scroll" className="flex h-[17px] w-[17px] shrink-0 items-center justify-center border border-[#ababab] bg-white">
      <svg width="9" height="6" viewBox="0 0 9 6" fill="none" stroke="#555" strokeWidth="1.4">
        <path d={d} />
      </svg>
    </button>
  );
}

function PropertiesDialog() {
  return (
    <section role="dialog" aria-label="Time Plot - Properties" className="absolute top-[42px] left-[203px] w-[538px] border border-[#5f6672] bg-[#cbd6e0] pb-[3px] text-[11px] text-black">
      <header className="flex h-[26px] items-start pl-[5px]">
        <svg width="16" height="16" viewBox="0 0 16 16" className="mt-[4px]">
          <rect width="16" height="16" rx="1" fill="#3b1354" />
          <text x="1" y="8" fontSize="8" fontWeight="700" fill="#fff" fontFamily="Inter, sans-serif">G5</text>
          <rect y="9.5" width="16" height="4" fill="#e0203c" />
          <path d="M2 11.5 H13" stroke="#f6a0ac" strokeDasharray="2 1" />
        </svg>
        <h1 className="flex-1 pl-[81px] text-center text-[14px] leading-[26px]">Time Plot - Properties</h1>
        <div className="mr-px flex h-[22px] border border-t-0 border-[#5f6672]">
          <button aria-label="Minimize" className="flex w-[28px] items-center justify-center border-r border-[#5f6672]">
            <svg width="10" height="9"><path d="M0 7.5 H10" stroke="#000" strokeWidth="3" /></svg>
          </button>
          <button aria-label="Maximize" className="flex w-[26px] items-center justify-center border-r border-[#5f6672]">
            <svg width="10" height="8"><path d="M1 1 H9 V7 H1 Z" fill="none" stroke="#000" strokeWidth="2" /></svg>
          </button>
          <button aria-label="Close" className="flex w-[45px] items-center justify-center">
            <svg width="10" height="8"><path d="M1 0 L9 8 M9 0 L1 8" stroke="#000" strokeWidth="2.2" /></svg>
          </button>
        </div>
      </header>
      <div className="mx-[3px] bg-[#f0f0f0]">
        <div role="tablist" className="flex h-[20px] items-end">
          <button role="tab" className="relative -mb-px h-[21px] w-[72px] self-end border border-b-0 border-[#8d919a] bg-white pb-[3px] leading-[17px]">Parameters</button>
          <button role="tab" className="h-[18px] w-[47px] border border-b-0 border-l-0 border-[#8d919a] leading-[18px]">Display</button>
        </div>
        <div className="border border-[#8d919a] bg-white pt-[12px] pr-[13px] pb-[14px] pl-[13px]">
          <fieldset className="min-w-0 rounded-[3px] border border-[#d5dfe5] pr-[2px] pb-[3px] pl-px">
            <legend className="ml-[3px] px-[3px] leading-[16px]">Parameters</legend>
            <div className="flex h-[390px] border border-[#828790] py-px pl-px">
              <div className="min-w-0 flex-1">
                <table className="w-full table-fixed border-collapse">
                  <colgroup>
                    <col />
                    <col className="w-[50px]" />
                    <col className="w-[50px]" />
                  </colgroup>
                  <thead>
                    <tr className="h-[15px] bg-[#fcfcfc] text-left leading-[14px]">
                      <th className="border border-[#e0e0e0] p-0"><span className="sr-only">Name</span></th>
                      <th className="border border-[#e0e0e0] p-0 pl-[5px] font-normal">Min</th>
                      <th className="border border-[#e0e0e0] p-0 pl-[5px] font-normal">Max</th>
                    </tr>
                  </thead>
                  {groups.map((rows, g) => (
                    <tbody key={g}>
                      <tr className="h-[17px] bg-[#f0f0f0]">
                        <th colSpan={3} className="p-0 pl-[2px] text-left leading-[17px] font-bold">Group</th>
                      </tr>
                      {rows.map(([name, min, max, color]) => (
                        <tr key={name} className="h-[17px] leading-[17px]">
                          <td className="p-0 pl-[14px]">
                            <div className="flex h-[17px] items-center">
                              <span className={`mr-[7px] h-[15px] w-[15px] border border-black ${color}`} />
                              {name}
                            </div>
                          </td>
                          <td className="p-0">{min}</td>
                          <td className="p-0">{max}</td>
                        </tr>
                      ))}
                    </tbody>
                  ))}
                </table>
              </div>
              <div className="flex w-[17px] flex-col bg-white">
                <Chevron d="M1 5 L4.5 1.5 L8 5" />
                <div className="h-[97px] border-x border-[#ababab]" />
                <div className="flex flex-1 flex-col items-center justify-center gap-px border border-[#ababab] bg-[#ddd]">
                  <span className="h-px w-[7px] bg-[#555]" />
                  <span className="h-px w-[7px] bg-[#555]" />
                  <span className="h-px w-[7px] bg-[#555]" />
                  <span className="h-px w-[7px] bg-[#555]" />
                </div>
                <Chevron d="M1 1 L4.5 4.5 L8 1" />
              </div>
            </div>
            <div className="mt-[5px] flex justify-end gap-[3px] pr-[3px]">
              <DialogButton className="w-[87px]">Add Group</DialogButton>
              <DialogButton className="w-[104px]">Add Parameter</DialogButton>
              <DialogButton className="w-[69px]">Remove</DialogButton>
              <DialogButton className="w-[54px]">Edit</DialogButton>
              <DialogButton className="w-[69px]">Move Up</DialogButton>
              <DialogButton className="w-[79px]">Move Down</DialogButton>
            </div>
          </fieldset>
        </div>
        <footer className="flex justify-end gap-[7px] pt-[5px] pr-[6px] pb-[3px]">
          <DialogButton className="w-[74px]">Ok</DialogButton>
          <DialogButton className="w-[74px]">Cancel</DialogButton>
          <DialogButton className="w-[74px]">Help</DialogButton>
        </footer>
      </div>
    </section>
  );
}

export default function App() {
  return (
    <div className="flex min-h-screen flex-col overflow-hidden bg-white font-['Noto_Sans',sans-serif]">
      <MenuBar />
      <div className="flex flex-1">
        <div className="flex w-[26px] shrink-0 flex-col items-end pt-[10px] pr-px">
          <SideTab label="Log File Manager" kind="log" className="h-[112px]" />
          <SideTab label="Event Log" kind="event" className="h-[77px] border-t-0" />
          <SideTab label="Parameters" kind="param" className="h-[83px] border-t-0" />
        </div>
        <SettingsPanel />
        <main className="flex min-w-0 flex-1 flex-col bg-black">
          <LayoutBar />
          <div className="relative min-h-[698px] flex-1 overflow-hidden">
            <LogTable />
            <ParameterList />
            <ThirdPlotWindow />
            <SecondPlotWindow />
            <MainPlotWindow />
            <PropertiesDialog />
          </div>
        </main>
      </div>
      <div className="h-[2px] shrink-0 border-t border-[#4c4c4c] bg-[#8cb4d8]" />
    </div>
  );
}
